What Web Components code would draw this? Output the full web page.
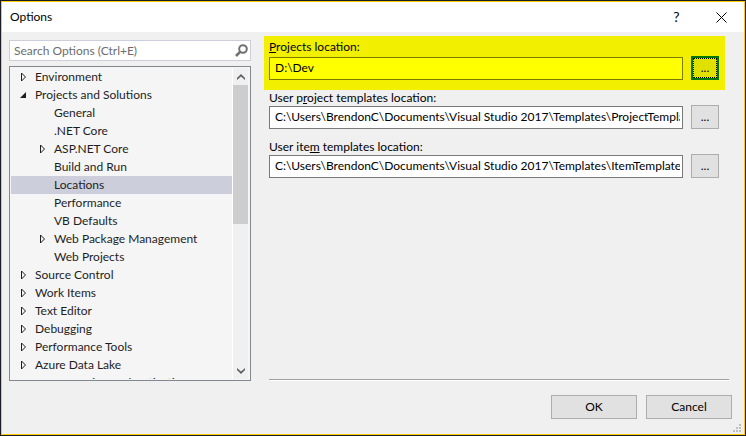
<!DOCTYPE html>
<html lang="en">
<head>
<meta charset="utf-8">
<title>Options</title>
<style>
  html, body { height: 100%; }
  body { margin: 0; font: 12px/18px Lato, "Open Sans", sans-serif; color: #000; }
</style>
</head>
<body>
<options-dialog>
  <span slot="title">Options</span>
  <search-box slot="nav" placeholder="Search Options (Ctrl+E)"></search-box>
  <option-tree slot="nav">
    <tree-item state="closed">Environment</tree-item>
    <tree-item state="open">Projects and Solutions</tree-item>
    <tree-item child>General</tree-item>
    <tree-item child>.NET Core</tree-item>
    <tree-item child state="closed">ASP.NET Core</tree-item>
    <tree-item child>Build and Run</tree-item>
    <tree-item child selected>Locations</tree-item>
    <tree-item child>Performance</tree-item>
    <tree-item child>VB Defaults</tree-item>
    <tree-item child state="closed">Web Package Management</tree-item>
    <tree-item child>Web Projects</tree-item>
    <tree-item state="closed">Source Control</tree-item>
    <tree-item state="closed">Work Items</tree-item>
    <tree-item state="closed">Text Editor</tree-item>
    <tree-item state="closed">Debugging</tree-item>
    <tree-item state="closed">Performance Tools</tree-item>
    <tree-item state="closed">Azure Data Lake</tree-item>
    <tree-item>Azure Service Authentication</tree-item>
  </option-tree>
  <location-field highlighted value="D:\Dev"><u>P</u>rojects location:</location-field>
  <location-field value="C:\Users\BrendonC\Documents\Visual Studio 2017\Templates\ProjectTemplates">User p<u>r</u>oject templates location:</location-field>
  <location-field value="C:\Users\BrendonC\Documents\Visual Studio 2017\Templates\ItemTemplates">User ite<u>m</u> templates location:</location-field>
  <push-button slot="actions">OK</push-button>
  <push-button slot="actions">Cancel</push-button>
</options-dialog>

<script>
const define = (name, html, setup) => {
  const template = document.createElement('template');
  template.innerHTML = html;
  customElements.define(name, class extends HTMLElement {
    constructor() {
      super();
      this.attachShadow({ mode: 'open' }).append(template.content.cloneNode(true));
    }
    connectedCallback() { if (setup) setup(this, this.shadowRoot); }
  });
};

define('options-dialog', `
<style>
  * { box-sizing: border-box; }
  :host { display: flex; flex-direction: column; box-sizing: border-box; height: 100vh;
    border: 1px solid #1c1c24; background: #f0f0f0; }
  .frame { flex: 1; min-height: 0; display: flex; flex-direction: column; border: 1px solid #fc0; }
  header { display: flex; align-items: center; height: 30px; padding-left: 8px; background: #fff; flex: none; }
  h1 { flex: 1; margin: 0; font: inherit; }
  header button { display: grid; place-items: center; width: 45px; height: 30px; border: 0; padding: 0;
    background: none; font: inherit; font-size: 14px; color: #000; }
  main { flex: 1; min-height: 0; display: grid; grid-template-columns: 242px minmax(0, 1fr); gap: 13px;
    padding: 8px 15px 0 7px; }
  nav { display: flex; flex-direction: column; gap: 5px; min-height: 0; }
  .page { display: flex; flex-direction: column; margin-top: -4px; min-height: 0; }
  .fields { flex: 1; display: flex; flex-direction: column; }
  hr { margin: 0 0 0 5px; border: 0; border-top: 1px solid #a0a0a0; border-bottom: 1px solid #fff; }
  footer { display: flex; justify-content: flex-end; gap: 9px; padding: 14px 12px 15px; flex: none; }
  .grip { position: absolute; right: 5px; bottom: 4px; }
</style>
<div class="frame">
  <header>
    <h1><slot name="title"></slot></h1>
    <button aria-label="Help">?</button>
    <button aria-label="Close"><svg width="11" height="11" viewBox="0 0 11 11" fill="none" stroke="#000"><path d="M.5.5l10 10M10.5.5l-10 10"/></svg></button>
  </header>
  <main>
    <nav><slot name="nav"></slot></nav>
    <section class="page"><div class="fields"><slot></slot></div><hr></section>
  </main>
  <footer><slot name="actions"></slot></footer>
</div>
<svg class="grip" width="8" height="8" fill="#bfbfbf"><path d="M6 0h2v2h-2zM3 3h2v2h-2zM6 3h2v2h-2zM0 6h2v2h-2zM3 6h2v2h-2zM6 6h2v2h-2z"/></svg>`);

define('search-box', `
<style>
  :host { display: flex; align-items: center; flex: none; box-sizing: border-box; height: 21px;
    border: 1px solid #cccedb; background: #fff; padding: 0 2px 0 4px; }
  input { flex: 1; min-width: 0; border: 0; padding: 0; height: 18px; background: none; font: inherit; outline: 0; }
  input::placeholder { color: #6d6d6d; opacity: 1; }
  button { display: flex; border: 0; padding: 0; background: none; }
</style>
<input type="text"><button aria-label="Search"><svg width="13" height="13" viewBox="0 0 13 13" fill="none" stroke="#717171"><circle cx="8" cy="5" r="3.8" stroke-width="2"/><path d="M5.3 7.7L1 12" stroke-width="2.6"/></svg></button>`,
(host, root) => {
  const input = root.querySelector('input');
  input.placeholder = host.getAttribute('placeholder');
  input.setAttribute('aria-label', input.placeholder);
});

define('option-tree', `
<style>
  :host { display: flex; flex: 1; min-height: 0; box-sizing: border-box; border: 1px solid #828790;
    background: #f5f5f5; padding: 1px; color: #1e1e1e; }
  .list { flex: 1; min-width: 0; overflow: hidden; }
  .bar { display: flex; flex-direction: column; width: 15px; margin-right: 1px; border-left: 1px solid #fff;
    background: #f0f0f0; }
  .bar button { display: grid; place-items: center; height: 17px; flex: none; border: 0; padding: 0; background: none; }
  .track { flex: 1; }
  .thumb { height: 50%; background: #cdcdcd; }
</style>
<div class="list" role="tree"><slot></slot></div>
<div class="bar">
  <button aria-label="Scroll up"><svg width="8" height="6" fill="#606060"><path d="M4 0L8 4V6L4 2.4 0 6V4z"/></svg></button>
  <div class="track"><div class="thumb"></div></div>
  <button aria-label="Scroll down"><svg width="8" height="6" fill="#606060"><path d="M4 6L0 2V0L4 3.6 8 0V2z"/></svg></button>
</div>`);

define('tree-item', `
<style>
  :host { display: flex; align-items: center; height: 18px; padding-left: 9px; white-space: nowrap; }
  :host([child]) { padding-left: 28px; }
  :host([selected]) { background: #cccedb; }
  .twist { display: flex; width: 15px; flex: none; }
  svg { display: none; }
  :host([state=closed]) .closed, :host([state=open]) .open { display: block; }
</style>
<span class="twist">
  <svg class="closed" width="8" height="10" fill="none" stroke="#1e1e1e"><path d="M1.5 1v8l4-4z"/></svg>
  <svg class="open" width="8" height="10" fill="#1e1e1e"><path d="M6 2v6H0z"/></svg>
</span><slot></slot>`, (host) => {
  host.setAttribute('role', 'treeitem');
  if (host.hasAttribute('state')) host.setAttribute('aria-expanded', host.getAttribute('state') === 'open');
  if (host.hasAttribute('selected')) host.setAttribute('aria-selected', 'true');
});

define('location-field', `
<style>
  * { box-sizing: border-box; }
  :host { display: block; padding: 0 5px 10px; margin-right: 4px; --edge: #7a7a7a; }
  :host([highlighted]) { padding: 2px 6px 10px 5px; background: #f2f000; --edge: #7a7a00; }
  label { display: block; height: 15px; line-height: 15px; }
  :host([highlighted]) label { height: 18px; line-height: 18px; }
  u { text-underline-offset: 2px; }
  .row { display: flex; align-items: center; gap: 8px; padding-right: 1px; }
  :host([highlighted]) .row { padding-right: 0; }
  input { flex: 1; min-width: 0; height: 23px; border: 1px solid var(--edge); padding: 0 2px 2px 5px;
    background: #fff; color: #000; font: inherit; outline: 0; border-radius: 0; }
  :host([highlighted]) input { background: #ff0; }
  button { width: 28px; height: 24px; border: 1px solid #adadad; padding: 0; background: #e1e1e1; font: inherit; color: #000; }
  :host([highlighted]) button { border: 2px solid #007800; background: #e1e100; outline: 1px dotted #000; outline-offset: -3px; }
</style>
<label for="path"><slot></slot></label>
<div class="row"><input id="path" type="text"><button aria-label="Browse">...</button></div>`,
(host, root) => { root.querySelector('input').value = host.getAttribute('value'); });

define('push-button', `
<style>
  :host { display: block; width: 86px; }
  button { width: 100%; height: 24px; border: 1px solid #adadad; padding: 0; background: #e1e1e1; font: inherit; color: #000; }
</style>
<button><slot></slot></button>`);
</script>
</body>
</html>
